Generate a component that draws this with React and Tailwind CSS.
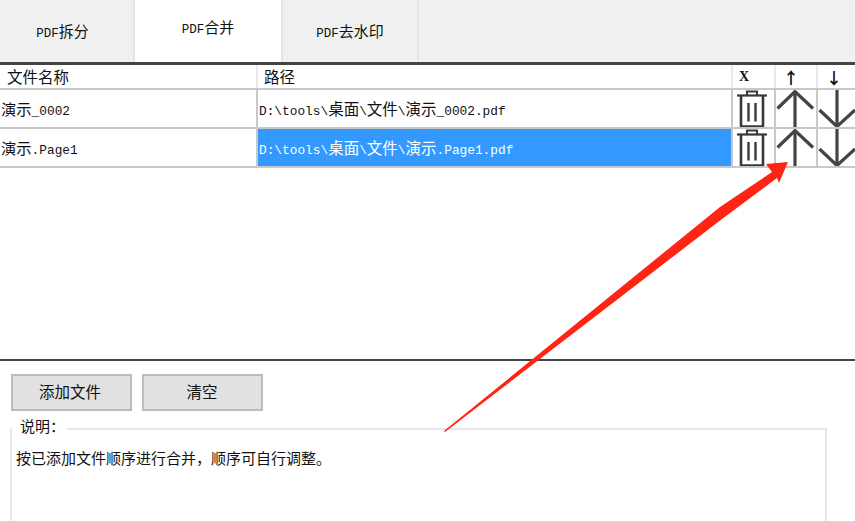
const latin = { fontFamily: '"Liberation Mono",monospace' };
const serif = { fontFamily: '"Liberation Serif",serif' };

function L({ children, size = "text-[12.800px]" }) {
  return <span className={size} style={latin}>{children}</span>;
}

function Trash() {
  return (
    <svg width="30" height="38" viewBox="0 0 30 38" className="block" fill="none" stroke="#383838">
      <path d="M10 5V1.500H20V5" strokeWidth="2" />
      <path d="M0 5.500H30" strokeWidth="2.200" />
      <path d="M4 6V36.500H26V6" strokeWidth="2.600" />
      <path d="M11.500 13V31.500M18.500 13V31.500" strokeWidth="2.400" />
    </svg>
  );
}

function Up() {
  return (
    <svg width="40" height="38" viewBox="0 0 40 38" className="block" fill="none" stroke="#444" strokeWidth="3.200">
      <path d="M19 38V1" />
      <path d="M1.500 18.500L19 1.500L37 18.500" />
    </svg>
  );
}

function Down() {
  return (
    <svg width="37" height="38" viewBox="0 0 37 38" className="block overflow-visible" fill="none" stroke="#444" strokeWidth="3.200">
      <path d="M19 0V36" />
      <path d="M1.500 20L19 36.500L37 20" />
    </svg>
  );
}

function Row({ name, path, selected }) {
  return (
    <div className="flex h-[39px] border-b-2 border-[#c8c8c8] overflow-hidden">
      <div className="w-[256px] shrink-0 flex items-center pl-[1px] pt-[3px] text-[15.300px] leading-none text-[#111] whitespace-pre"><span>{name}</span></div>
      <div
        className={selected ? "w-[475px] shrink-0 flex items-center pl-[1px] pt-[3px] text-[15.500px] leading-none border-l-2 border-[#c8c8c8] bg-[#3399ff] text-white whitespace-pre" : "w-[475px] shrink-0 flex items-center pl-[1px] pt-[3px] text-[15.500px] leading-none border-l-2 border-[#c8c8c8] text-[#111] whitespace-pre"}
      ><span>{path}</span></div>
      <div className="w-[43px] shrink-0 border-l-2 border-[#c8c8c8] pl-[4px]"><Trash /></div>
      <div className="w-[42px] shrink-0 border-l-2 border-[#c8c8c8]"><Up /></div>
      <div className="flex-1 border-l-2 border-[#c8c8c8]"><Down /></div>
    </div>
  );
}

export default function App() {
  return (
    <div className="relative w-[855px] h-[521px] overflow-hidden bg-white text-[#111]" style={{ fontFamily: '"Noto Sans CJK SC",sans-serif' }}>
      <div className="flex h-[62px] bg-[#f0f0f0] text-[15px] leading-none">
        <div className="w-[135px] flex items-center justify-center border-r-2 border-[#e4e4e4] pt-[1px] pr-[8px]"><span><L size="text-[12.500px]">PDF</L>拆分</span></div>
        <div className="w-[146px] flex items-center justify-center bg-white pb-[7px]"><span><L size="text-[12.500px]">PDF</L>合并</span></div>
        <div className="w-[138px] flex items-center justify-center border-x-2 border-[#e4e4e4] pt-[1px]"><span><L size="text-[12.500px]">PDF</L>去水印</span></div>
      </div>
      <div className="h-[3px] bg-[#444]" />
      <div className="flex h-[25px] border-b-2 border-[#c8c8c8] text-[15.500px] leading-none">
        <div className="w-[256px] shrink-0 flex items-center pl-[7px]">文件名称</div>
        <div className="w-[475px] shrink-0 flex items-center pl-[6px] border-l-2 border-[#e8e8e8]">路径</div>
        <div className="w-[43px] shrink-0 flex items-center pl-[6px] border-l-2 border-[#e8e8e8] text-[14px] font-bold" style={serif}>X</div>
        <div className="w-[42px] shrink-0 flex items-center pl-[7px] border-l-2 border-[#e8e8e8] text-[16px] font-bold">↑</div>
        <div className="flex-1 flex items-center pl-[8px] border-l-2 border-[#e8e8e8] text-[16px] font-bold">↓</div>
      </div>
      <Row name={<>演示<L>_0002</L></>} path={<><L>D:\tools\</L>桌面<L>\</L>文件<L>\</L>演示<L>_0002.pdf</L></>} />
      <Row name={<>演示<L>.Page1</L></>} path={<><L>D:\tools\</L>桌面<L>\</L>文件<L>\</L>演示<L>.Page1.pdf</L></>} selected />
      <div className="h-[191px]" />
      <div className="h-[2px] bg-[#444]" />
      <div className="flex gap-[10px] pl-[11px] pt-[13px]">
        <button className="w-[121px] h-[37px] bg-[#e1e1e1] border-2 border-[#bcbcbc] text-[15.500px] leading-none pb-[2px] pr-[3px]">添加文件</button>
        <button className="w-[121px] h-[37px] bg-[#e1e1e1] border-2 border-[#bcbcbc] text-[15.500px] leading-none pb-[2px] pr-[1px]">清空</button>
      </div>
      <fieldset className="ml-[10px] mt-[4px] w-[817px] h-[145px] border-2 border-[#e8e8e8] pl-[4px] pt-[6px] m-0">
        <legend className="-ml-[4px] pl-[8px] pr-[2px] pb-[7px] text-[15px] leading-[21px]">说明：</legend>
        <div className="text-[15px] leading-[20px] -mt-[1px]">按已添加文件顺序进行合并，顺序可自行调整。</div>
      </fieldset>
      <svg className="absolute left-0 top-0 pointer-events-none" width="855" height="521" viewBox="0 0 855 521">
        <polygon fill="#ff2414" points="444,431 720,207 772,172 766,164 788,162 779,183 777,178 722,219 445,432" />
      </svg>
    </div>
  );
}
